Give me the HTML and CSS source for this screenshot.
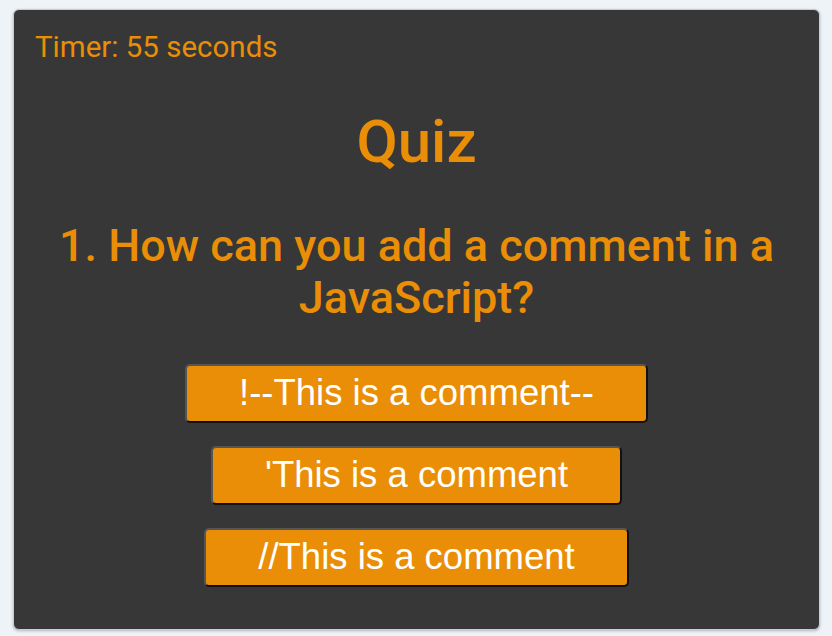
FILE: index.html
```html
<!DOCTYPE html>
<html lang="en">
<head>
<meta charset="utf-8">
<title>Quiz</title>
<link rel="stylesheet" href="styles.css">
</head>
<body>
<div class="page">
  <main class="card">
    <div class="timer">Timer: 55 seconds</div>
    <h1 class="title">Quiz</h1>
    <h2 class="question">1. How can you add a comment in a JavaScript?</h2>
    <div class="answers">
      <button class="answer">!--This is a comment--</button>
      <button class="answer">'This is a comment</button>
      <button class="answer">//This is a comment</button>
    </div>
  </main>
</div>
</body>
</html>
```
FILE: styles.css
```css
html, body {
  margin: 0;
  padding: 0;
  background: #eef3f8;
  height: 100%;
}
.page {
  box-sizing: border-box;
  height: 100vh;
  padding: 9px 12px 6px 13px;
  display: flex;
}
.card {
  flex: 1;
  background: #373737;
  border: 1px solid #c9cdd1;
  border-radius: 6px;
  box-shadow: 0 1px 3px rgba(0,0,0,0.25);
  padding: 20px 21px;
  display: flex;
  flex-direction: column;
  align-items: center;
  font-family: Roboto, "Liberation Sans", sans-serif;
  color: #e98e06;
}
.timer {
  align-self: flex-start;
  font-size: 29.5px;
  line-height: 34px;
}
.title {
  margin: 43px 0 0;
  font-size: 60px;
  font-weight: 500;
  line-height: 70px;
}
.question {
  margin: 43px 0 0;
  font-size: 45px;
  font-weight: 500;
  line-height: 52px;
  text-align: center;
}
.answers {
  margin-top: 40px;
  display: flex;
  flex-direction: column;
  align-items: center;
  gap: 23px;
}
.answer {
  font-family: "Liberation Sans", Arial, sans-serif;
  font-size: 36.5px;
  line-height: 42px;
  color: #ffffff;
  background: #e98e06;
  border: 2px solid;
  border-color: #555555 #111111 #111111 #555555;
  border-radius: 5px;
  padding: 6px 52px 7px;
  cursor: pointer;
}
```
